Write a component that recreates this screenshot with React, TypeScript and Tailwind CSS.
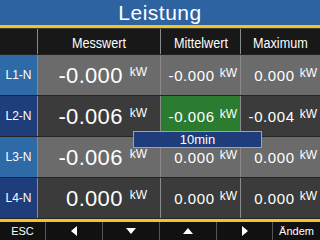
import React from "react";

type Row = {
    label: string;
    mess: string;
    mittel: string;
    max: string;
    light: boolean;
    highlight?: boolean;
};

const rows: Row[] = [
    { label: "L1-N", mess: "-0.000", mittel: "-0.000", max: "0.000", light: true },
    { label: "L2-N", mess: "-0.006", mittel: "-0.006", max: "-0.004", light: false, highlight: true },
    { label: "L3-N", mess: "-0.006", mittel: "0.000", max: "0.000", light: true },
    { label: "L4-N", mess: "0.000", mittel: "0.000", max: "0.000", light: false },
];

function Tri({ dir }: { dir: "left" | "right" | "up" | "down" }) {
    const pts = {
        left: "7,1 7,11 1,6",
        right: "1,1 1,11 7,6",
        up: "1,8 11,8 6,2",
        down: "1,2 11,2 6,8",
    }[dir];
    const w = dir === "left" || dir === "right" ? 8 : 12;
    const h = dir === "left" || dir === "right" ? 12 : 10;
    return (
        <svg width={w} height={h} viewBox={`0 0 ${w} ${h}`}>
            <polygon points={pts} fill="#ffffff" />
        </svg>
    );
}

export default function App() {
    return (
        <div
            className="relative w-[320px] h-[240px] overflow-hidden bg-[#202020] text-white flex flex-col"
            style={{ fontFamily: '"Liberation Sans", Arial, sans-serif' }}
        >
            {/* titel */}
            <div className="h-[25px] bg-[#2e63a2] flex items-center justify-center text-[21px] leading-none tracking-[0.5px]">
                Leistung
            </div>
            <div className="h-[3px] bg-[#f2c42a]" />
            <div className="h-[1px] bg-[#3a3a3a]" />

            {/* kopfzeile */}
            <div className="h-[25px] flex bg-[#181818] text-[14px] leading-none">
                <div className="w-[37px]" />
                <div className="w-[123px] border-l border-[#8a8a8a] flex items-center justify-center pt-[3px]">
                    <span className="scale-x-[0.9] inline-block">Messwert</span>
                </div>
                <div className="w-[80px] border-l border-[#8a8a8a] flex items-center justify-center pt-[3px]">
                    <span className="scale-x-[0.9] inline-block">Mittelwert</span>
                </div>
                <div className="w-[80px] border-l border-[#8a8a8a] flex items-center justify-center pt-[3px]">
                    <span className="scale-x-[0.9] inline-block">Maximum</span>
                </div>
            </div>

            {/* werte */}
            <div className="flex flex-col gap-[1px] bg-[#242424] pt-[1px]">
                {rows.map((r) => (
                    <div key={r.label} className="h-[40px] flex">
                        <div
                            className={`w-[37px] flex items-center justify-center text-[12px] ${
                                r.light ? "bg-[#2e69a8]" : "bg-[#1f3c7b]"
                            }`}
                        >
                            {r.label}
                        </div>
                        <div
                            className={`w-[123px] border-l border-[#8a8a8a] flex items-center justify-end pr-[13px] ${
                                r.light ? "bg-[#6b6b6b]" : "bg-[#3b3b3b]"
                            }`}
                        >
                            <span className="text-[22px] leading-none tracking-[0.3px] pt-[1px]">{r.mess}</span>
                            <span className="text-[12px] leading-none ml-[7px] -mt-[6px]">kW</span>
                        </div>
                        <div
                            className={`w-[80px] border-l border-[#8a8a8a] flex items-center justify-end pr-[3px] ${
                                r.highlight ? "bg-[#2b7b30]" : r.light ? "bg-[#6b6b6b]" : "bg-[#3b3b3b]"
                            }`}
                        >
                            <span className="text-[15px] leading-none tracking-[0.6px]">{r.mittel}</span>
                            <span className="text-[12px] leading-none ml-[5px] -mt-[4px]">kW</span>
                        </div>
                        <div
                            className={`w-[80px] border-l border-[#8a8a8a] flex items-center justify-end pr-[3px] ${
                                r.light ? "bg-[#6b6b6b]" : "bg-[#3b3b3b]"
                            }`}
                        >
                            <span className="text-[15px] leading-none tracking-[0.6px]">{r.max}</span>
                            <span className="text-[12px] leading-none ml-[5px] -mt-[4px]">kW</span>
                        </div>
                    </div>
                ))}
            </div>

            <div className="h-[1px] bg-[#242424]" />
            <div className="h-[3px] bg-[#f2c42a]" />

            {/* fußleiste */}
            <div className="flex-1 flex bg-[#111111] text-[11px] leading-none">
                <div className="w-[45px] flex items-center justify-center">ESC</div>
                <div className="w-[57px] border-l border-[#555] flex items-center justify-center">
                    <Tri dir="left" />
                </div>
                <div className="w-[57px] border-l border-[#555] flex items-center justify-center">
                    <Tri dir="down" />
                </div>
                <div className="w-[57px] border-l border-[#555] flex items-center justify-center">
                    <Tri dir="up" />
                </div>
                <div className="w-[56px] border-l border-[#555] flex items-center justify-center">
                    <Tri dir="right" />
                </div>
                <div className="flex-1 border-l border-[#555] flex items-center justify-center">Ändem</div>
            </div>

            {/* auswahl popup */}
            <div className="absolute left-[133px] top-[131px] w-[129px] h-[17px] bg-[#1f3c7b] border border-[#8fa6c8] flex items-center justify-center text-[13px] leading-none">
                10min
            </div>
        </div>
    );
}
